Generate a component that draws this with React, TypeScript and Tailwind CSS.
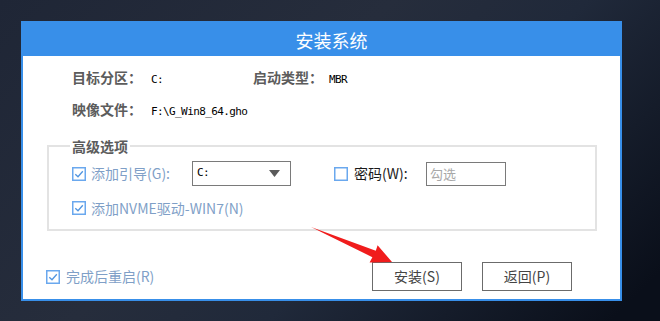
import React from "react";

const CJK = { fontFamily: '"Microsoft YaHei","Noto Sans CJK SC",sans-serif' };
const MONO = { fontFamily: '"DejaVu Sans Mono","Liberation Mono",monospace' };

function Check({ checked }: { checked: boolean }) {
  return (
    <svg width="14" height="14" viewBox="0 0 14 14" className="shrink-0">
      <rect x="0.75" y="0.75" width="12.5" height="12.5" fill="#fff" stroke="#6aa8ee" strokeWidth="1.5" />
      {checked && (
        <path d="M3.3 7.2 L6 9.8 L10.8 4.3" fill="none" stroke="#5195e0" strokeWidth="1.3" />
      )}
    </svg>
  );
}

export default function App() {
  return (
    <div
      className="relative w-[660px] h-[321px] overflow-hidden bg-[linear-gradient(135deg,#1f2636_0%,#262d3c_40%,#20293a_60%,#0a0f1a_95%)]"
      style={CJK}
    >
      <div className="pt-[21px] pl-[21px]">
        <div className="w-[601px] h-[280px] bg-[#388fe9] p-[2px] flex flex-col">
          <div className="h-[33px] flex items-center justify-center pl-[20px] text-white text-[18px] leading-none">
            安装系统
          </div>
          <div className="flex-1 bg-white pl-[23px] pt-[11px] flex flex-col">
            <div className="flex items-baseline pl-[26px] h-[20px] leading-5">
              <span className="w-[79px] text-[14px] font-bold text-[#5c5c5c]">目标分区：</span>
              <span className="w-[102px] text-[11px] tracking-[-0.6px] text-black" style={MONO}>C:</span>
              <span className="w-[76px] text-[14px] font-bold text-[#5c5c5c]">启动类型：</span>
              <span className="text-[11px] tracking-[-0.6px] text-black" style={MONO}>MBR</span>
            </div>
            <div className="flex items-baseline pl-[26px] h-[20px] mt-[12px] leading-5">
              <span className="w-[79px] text-[14px] font-bold text-[#5c5c5c]">映像文件：</span>
              <span className="text-[11px] tracking-[-0.6px] text-black" style={MONO}>F:\G_Win8_64.gho</span>
            </div>

            <fieldset className="ml-[1px] mt-[17px] w-[550px] border-2 border-[#e3e3e3] pb-[11px]">
              <legend className="ml-[21px] px-[2px] text-[14px] leading-5 font-bold text-[#5c5c5c]">高级选项</legend>
              <div className="flex items-center h-[25px] mt-[5px] pl-[23px]">
                <Check checked />
                <span className="ml-[5px] w-[101px] text-[14px] text-[#7f9fc7]">添加引导(G):</span>
                <div className="w-[99px] h-[25px] border border-[#7a7a7a] bg-white flex items-center justify-between pl-[4px] pr-[10px]">
                  <span className="text-[11px] tracking-[-0.6px] text-black" style={MONO}>C:</span>
                  <svg width="11" height="7" viewBox="0 0 11 7">
                    <path d="M0 0 H11 L5.5 7 Z" fill="#5a5a5a" />
                  </svg>
                </div>
                <div className="ml-[43px]">
                  <Check checked={false} />
                </div>
                <span className="ml-[6px] w-[72px] text-[14px] text-[#1a1a1a]">密码(W):</span>
                <div className="w-[80px] h-[24px] border border-[#7a7a7a] bg-white flex items-center pl-[3px]">
                  <span className="text-[13px] text-[#a8a8a8]">勾选</span>
                </div>
              </div>
              <div className="flex items-center h-[20px] mt-[12px] pl-[23px]">
                <Check checked />
                <span className="ml-[5px] text-[14px] text-[#7f9fc7]">添加NVME驱动-WIN7(N)</span>
              </div>
            </fieldset>

            <div className="flex items-center mt-[31px] h-[29px] pr-[48px]">
              <Check checked />
              <span className="ml-[6px] text-[14px] text-[#7f9fc7]">完成后重启(R)</span>
              <div className="flex-1" />
              <button className="w-[90px] h-[29px] border border-[#6b6b6b] bg-white text-[14px] text-[#444]">安装(S)</button>
              <button className="ml-[20px] w-[90px] h-[29px] border border-[#6b6b6b] bg-white text-[14px] text-[#444]">返回(P)</button>
            </div>
          </div>
        </div>
      </div>

      <svg className="absolute left-0 top-0 pointer-events-none" width="660" height="321" viewBox="0 0 660 321">
        <polygon
          points="311,227 375.8,250.8 377.6,245.2 392,262 369.6,262.6 372.4,257.2"
          fill="#f01c1c"
        />
      </svg>
    </div>
  );
}
